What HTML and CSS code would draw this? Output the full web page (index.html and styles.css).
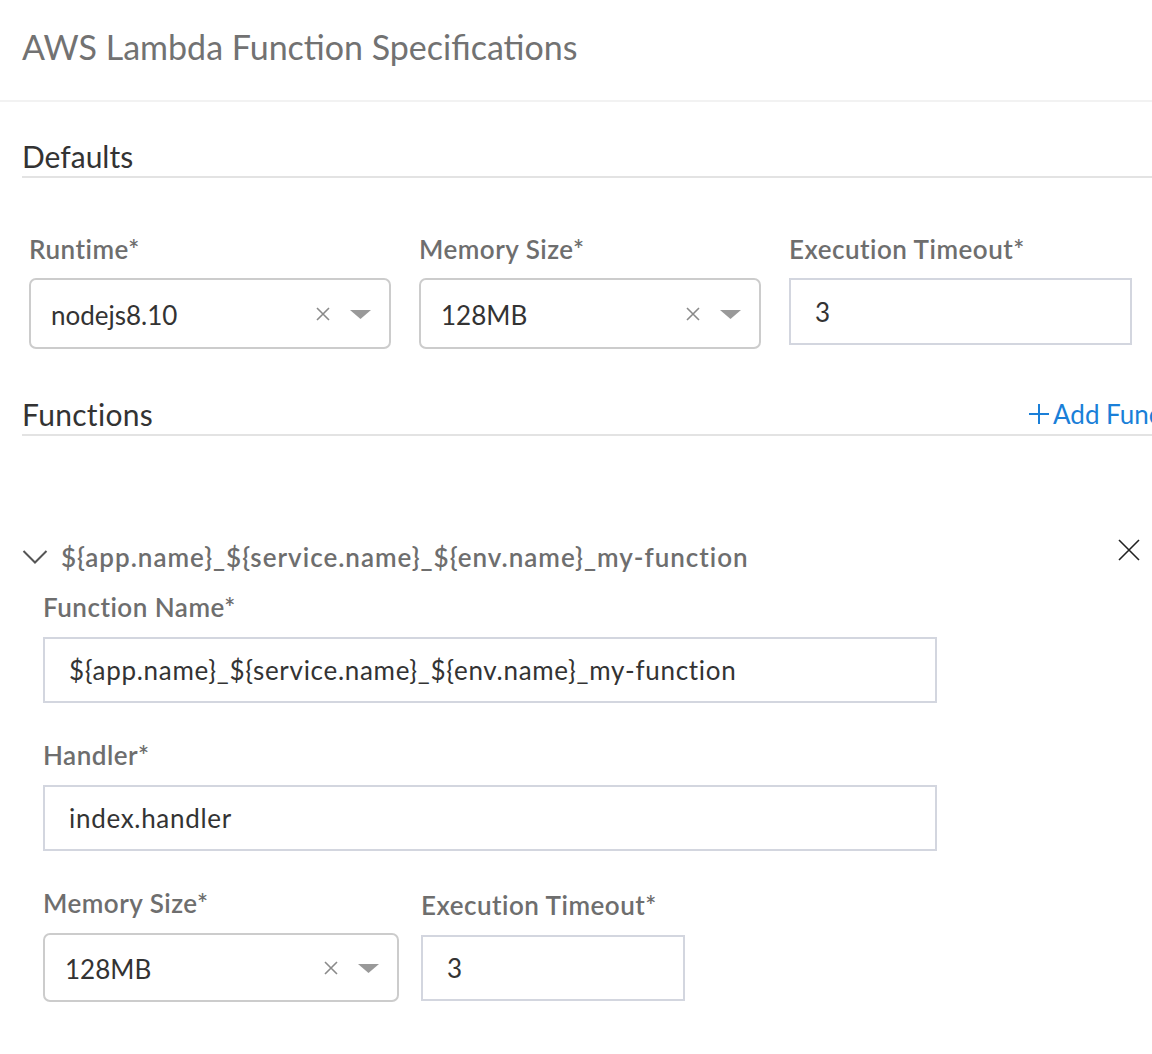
FILE: index.html
```html
<!DOCTYPE html>
<html>
<head>
<meta charset="utf-8">
<link rel="stylesheet" href="styles.css">
</head>
<body>
<div class="page">
  <header class="header">
    <h1 class="title">AWS Lambda Function Specifications</h1>
  </header>

  <div class="section-head defaults-head">
    <h2 class="section-title">Defaults</h2>
  </div>

  <div class="defaults-row">
    <div class="field f-runtime">
      <label class="label">Runtime*</label>
      <div class="select">
        <span class="select-value">nodejs8.10</span>
        <span class="select-icons">
          <svg class="clear" width="14" height="14" viewBox="0 0 14 14"><path d="M1 1L13 13M13 1L1 13" stroke="#8a8a8a" stroke-width="1.6" fill="none"/></svg>
          <svg class="caret" width="21" height="9" viewBox="0 0 21 9"><path d="M0 0H21L10.5 9Z" fill="#999"/></svg>
        </span>
      </div>
    </div>
    <div class="field f-mem">
      <label class="label">Memory Size*</label>
      <div class="select">
        <span class="select-value">128MB</span>
        <span class="select-icons">
          <svg class="clear" width="14" height="14" viewBox="0 0 14 14"><path d="M1 1L13 13M13 1L1 13" stroke="#8a8a8a" stroke-width="1.6" fill="none"/></svg>
          <svg class="caret" width="21" height="9" viewBox="0 0 21 9"><path d="M0 0H21L10.5 9Z" fill="#999"/></svg>
        </span>
      </div>
    </div>
    <div class="field f-exec">
      <label class="label">Execution Timeout*</label>
      <div class="input">3</div>
    </div>
  </div>

  <div class="section-head functions-head">
    <h2 class="section-title">Functions</h2>
    <a class="add-link">
      <svg width="20" height="22" viewBox="0 0 20 22"><path d="M10 1V21M0 11H20" stroke="#1a7fd8" stroke-width="2" fill="none"/></svg>Add Function
    </a>
  </div>

  <div class="fn-block">
    <div class="fn-head">
      <svg class="chevron" width="26" height="16" viewBox="0 0 26 16"><path d="M1.5 2L13 13.5L24.5 2" stroke="#555" stroke-width="2" fill="none"/></svg>
      <span class="fn-title">${app.name}_${service.name}_${env.name}_my-function</span>
      <svg class="close" width="22" height="22" viewBox="0 0 22 22"><path d="M1 1L21 21M21 1L1 21" stroke="#222" stroke-width="1.6" fill="none"/></svg>
    </div>
    <div class="fn-body">
      <div class="field">
        <label class="label">Function Name*</label>
        <div class="input wide">${app.name}_${service.name}_${env.name}_my-function</div>
      </div>
      <div class="field spaced">
        <label class="label">Handler*</label>
        <div class="input wide">index.handler</div>
      </div>
      <div class="fn-row spaced">
        <div class="field f-mem2">
          <label class="label">Memory Size*</label>
          <div class="select sm">
            <span class="select-value">128MB</span>
            <span class="select-icons">
              <svg class="clear" width="14" height="14" viewBox="0 0 14 14"><path d="M1 1L13 13M13 1L1 13" stroke="#8a8a8a" stroke-width="1.6" fill="none"/></svg>
              <svg class="caret" width="21" height="9" viewBox="0 0 21 9"><path d="M0 0H21L10.5 9Z" fill="#999"/></svg>
            </span>
          </div>
        </div>
        <div class="field f-exec2">
          <label class="label">Execution Timeout*</label>
          <div class="input">3</div>
        </div>
      </div>
    </div>
  </div>
</div>
</body>
</html>
```

FILE: styles.css
```css
html, body {
  margin: 0;
  padding: 0;
  background: #fff;
  overflow: hidden;
}
body {
  font-family: "Lato", "Liberation Sans", sans-serif;
  color: #333;
}
.page {
  width: 1152px;
}
.header {
  height: 102px;
  box-sizing: border-box;
  padding-left: 22px;
  padding-top: 27px;
  border-bottom: 2px solid #f2f2f2;
}
.title {
  margin: 0;
  font-size: 34px;
  line-height: 40px;
  font-weight: 400;
  color: #727272;
}
.section-head {
  margin-left: 22px;
  padding-bottom: 2px;
  border-bottom: 2px solid #e3e3e3;
}
.defaults-head {
  margin-top: 36px;
}
.section-title {
  margin: 0;
  font-size: 30px;
  line-height: 36px;
  font-weight: 400;
  color: #333;
}
.functions-head .section-title {
  letter-spacing: 0.3px;
}
.defaults-row {
  margin-left: 29px;
  margin-top: 56px;
  display: flex;
  gap: 28px;
}
.field {
  display: flex;
  flex-direction: column;
}
.label {
  font-size: 26px;
  line-height: 30px;
  font-weight: 600;
  letter-spacing: 0.5px;
  color: #6e6e6e;
  margin-bottom: 14px;
}
.f-runtime { width: 362px; }
.f-mem { width: 342px; }
.f-exec { width: 343px; }
.select {
  height: 71px;
  box-sizing: border-box;
  border: 2px solid #cccccc;
  border-radius: 7px;
  display: flex;
  align-items: center;
  padding: 2px 18px 0 20px;
  font-size: 26px;
  color: #333;
}
.select-value {
  flex: 1;
}
.select-icons {
  display: flex;
  align-items: center;
  gap: 20px;
}
.select-icons .clear {
  margin-top: -2px;
}
.input {
  height: 67px;
  box-sizing: border-box;
  border: 2px solid #d3d6df;
  display: flex;
  align-items: center;
  padding-left: 24px;
  font-size: 26px;
  letter-spacing: 0.7px;
  color: #333;
}
.functions-head {
  margin-top: 47px;
  display: grid;
  grid-template-columns: 1007px max-content;
  align-items: center;
  width: 1250px;
}
.add-link {
  display: flex;
  align-items: center;
  gap: 4px;
  font-size: 26px;
  color: #1a7fd8;
  white-space: nowrap;
}
.fn-block {
  margin-left: 22px;
  margin-top: 106px;
  width: 1118px;
}
.fn-head {
  display: flex;
  align-items: center;
  height: 30px;
}
.chevron {
  margin-right: 13px;
}
.fn-title {
  flex: 1;
  font-size: 26px;
  line-height: 30px;
  font-weight: 600;
  letter-spacing: 1px;
  color: #6e6e6e;
}
.close {
  margin-top: -14px;
}
.fn-body {
  padding-left: 21px;
  padding-top: 20px;
}
.fn-body .label {
  margin-bottom: 15px;
}
.input.wide {
  width: 894px;
  height: 66px;
}
.spaced {
  margin-top: 37px;
}
.fn-row {
  display: flex;
  gap: 22px;
  align-items: flex-start;
}
.f-mem2 { width: 356px; }
.f-exec2 { width: 264px; margin-top: 2px; }
.select.sm {
  height: 69px;
}
.f-exec2 .input {
  height: 66px;
}
```
